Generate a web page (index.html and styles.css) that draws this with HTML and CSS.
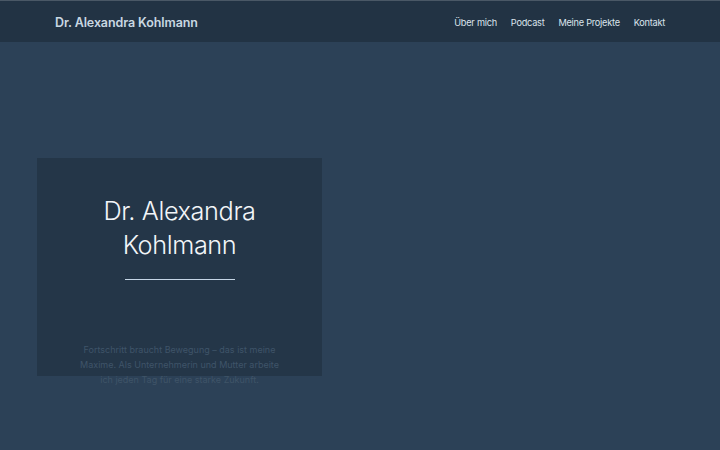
FILE: index.html
```html
<!DOCTYPE html>
<html lang="de">
<head>
<meta charset="utf-8">
<title>Dr. Alexandra Kohlmann</title>
<link rel="stylesheet" href="styles.css">
</head>
<body>
<header class="site-header">
  <div class="brand">Dr. Alexandra Kohlmann</div>
  <nav class="nav">
    <a href="#">Über mich</a>
    <a href="#">Podcast</a>
    <a href="#">Meine Projekte</a>
    <a href="#">Kontakt</a>
  </nav>
</header>
<main class="hero">
  <section class="card">
    <h1 class="title">Dr. Alexandra<br>Kohlmann</h1>
    <div class="divider"></div>
    <p class="lead">Fortschritt braucht Bewegung – das ist meine Maxime. Als Unternehmerin und Mutter arbeite ich jeden Tag für eine starke Zukunft.</p>
  </section>
</main>
</body>
</html>
```
FILE: styles.css
```css
html, body {
  margin: 0;
  padding: 0;
}
body {
  width: 720px;
  height: 450px;
  overflow: hidden;
  background: #2c4157;
  font-family: Inter, "Noto Sans", "Liberation Sans", sans-serif;
}
.site-header {
  height: 42px;
  box-sizing: border-box;
  border-top: 1px solid #4a5866;
  background: #223344;
  display: flex;
  align-items: center;
  justify-content: space-between;
  padding: 1px 55px 0;
}
.brand {
  color: #c9d8e2;
  font-size: 12.5px;
  font-weight: 600;
  letter-spacing: -0.1px;
}
.nav {
  display: flex;
  gap: 14px;
}
.nav a {
  color: #dbe4ec;
  text-decoration: none;
  font-size: 9.2px;
  letter-spacing: -0.25px;
}
.hero {
  padding: 116px 0 0 37px;
}
.card {
  width: 285px;
  height: 218px;
  box-sizing: border-box;
  background: #243648;
  padding-top: 36px;
  display: flex;
  flex-direction: column;
  align-items: center;
}
.title {
  flex-shrink: 0;
  margin: 0;
  color: #f2f5f8;
  font-size: 25.3px;
  font-weight: 300;
  line-height: 34px;
  text-align: center;
  letter-spacing: -0.4px;
}
.divider {
  flex-shrink: 0;
  width: 110px;
  height: 1px;
  background: #c5d6e6;
  margin-top: 17px;
}
.lead {
  flex-shrink: 0;
  margin: 62px 0 0;
  width: 200px;
  color: #3f5468;
  font-size: 9px;
  line-height: 15px;
  text-align: center;
}
```
